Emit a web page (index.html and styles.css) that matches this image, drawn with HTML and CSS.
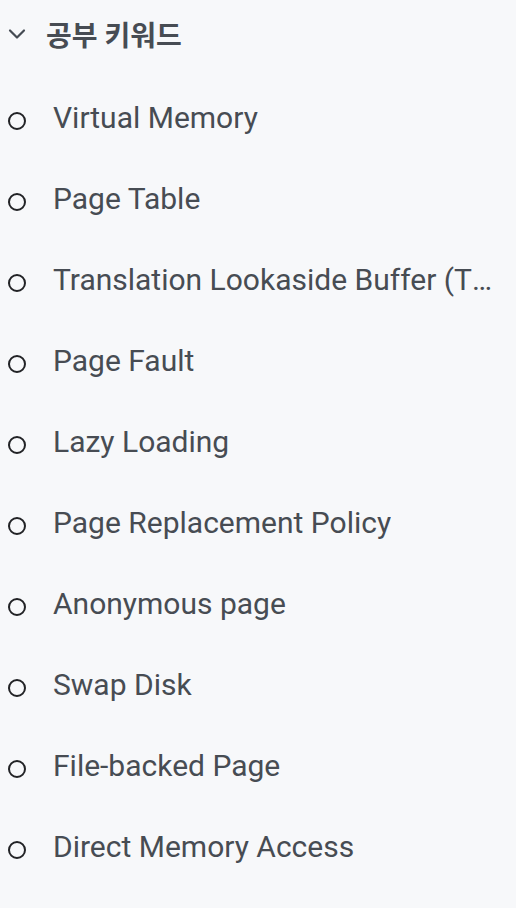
FILE: index.html
```html
<!DOCTYPE html>
<html lang="ko">
<head>
<meta charset="utf-8">
<link rel="stylesheet" href="styles.css">
</head>
<body>
<section class="toc">
  <div class="toc-header">
    <svg class="chevron" width="18" height="16" viewBox="0 0 18 16"><path d="M2 4.5 L9 11.5 L16 4.5" fill="none" stroke="#454b53" stroke-width="2.2" stroke-linecap="round" stroke-linejoin="round"/></svg>
    <span class="toc-title">공부 키워드</span>
  </div>
  <ul class="toc-list">
    <li class="toc-item"><span class="bullet"></span><span class="label">Virtual Memory</span></li>
    <li class="toc-item"><span class="bullet"></span><span class="label">Page Table</span></li>
    <li class="toc-item"><span class="bullet"></span><span class="label">Translation Lookaside Buffer (TLB)</span></li>
    <li class="toc-item"><span class="bullet"></span><span class="label">Page Fault</span></li>
    <li class="toc-item"><span class="bullet"></span><span class="label">Lazy Loading</span></li>
    <li class="toc-item"><span class="bullet"></span><span class="label">Page Replacement Policy</span></li>
    <li class="toc-item"><span class="bullet"></span><span class="label">Anonymous page</span></li>
    <li class="toc-item"><span class="bullet"></span><span class="label">Swap Disk</span></li>
    <li class="toc-item"><span class="bullet"></span><span class="label">File-backed Page</span></li>
    <li class="toc-item"><span class="bullet"></span><span class="label">Direct Memory Access</span></li>
  </ul>
</section>
</body>
</html>
```
FILE: styles.css
```css
html, body {
  margin: 0;
  padding: 0;
  background: #f7f8fa;
}
body {
  font-family: Roboto, "Noto Sans CJK KR", sans-serif;
  color: #474c53;
  width: 516px;
  height: 908px;
  overflow: hidden;
}
.toc {
  padding: 0 14px 0 8px;
}
.toc-header {
  display: flex;
  align-items: center;
  height: 68px;
  gap: 20px;
}
.chevron {
  flex: none;
}
.toc-title {
  font-size: 28px;
  font-weight: 700;
  color: #474c53;
}
.toc-list {
  list-style: none;
  margin: 9px 0 0;
  padding: 0;
}
.toc-item {
  display: flex;
  align-items: center;
  height: 81px;
  gap: 27px;
}
.bullet {
  flex: none;
  width: 14px;
  height: 14px;
  border: 2px solid #222326;
  border-radius: 50%;
  margin-top: 6px;
}
.label {
  font-size: 30px;
  white-space: nowrap;
  overflow: hidden;
  text-overflow: ellipsis;
  min-width: 0;
}
```
